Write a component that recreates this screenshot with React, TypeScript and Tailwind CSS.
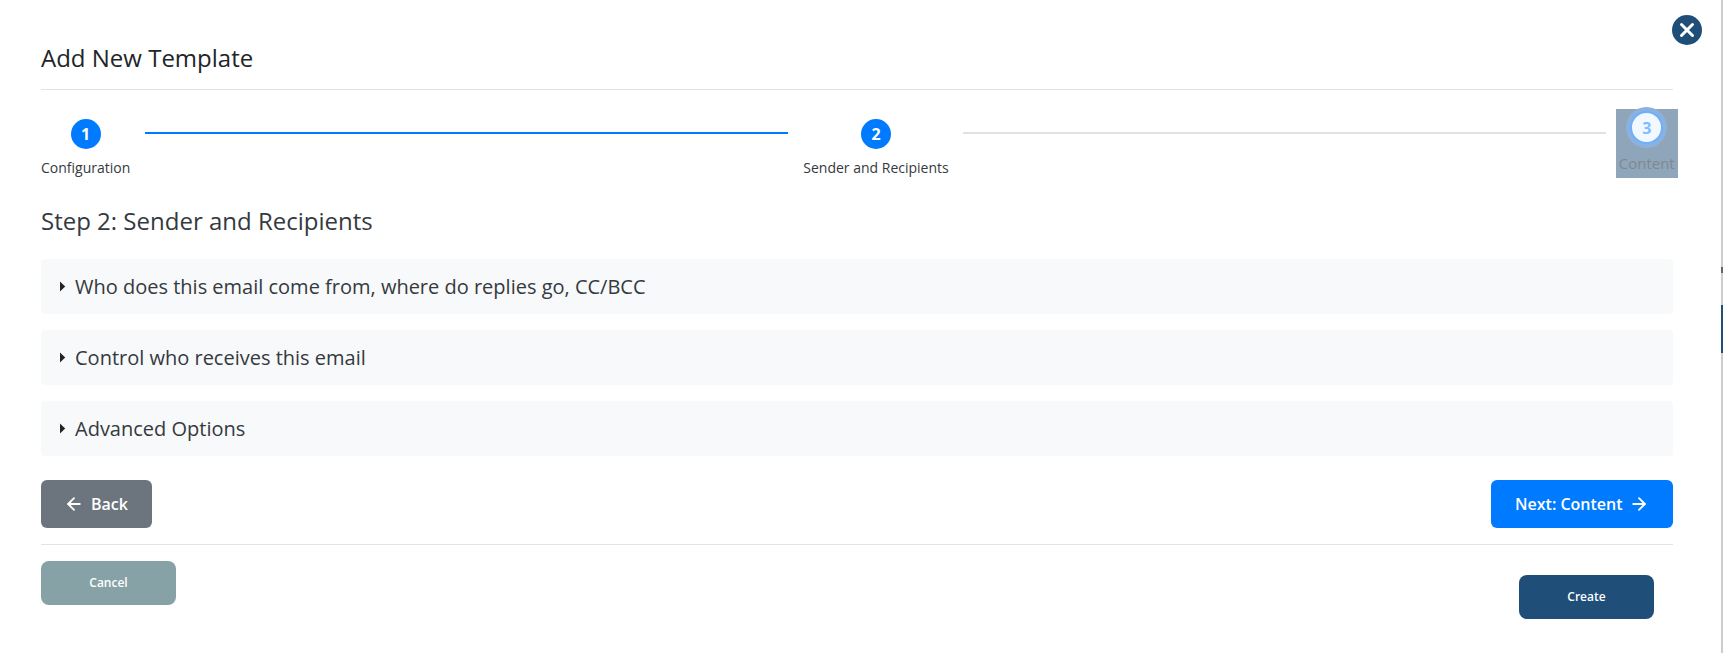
import { ArrowLeft, ArrowRight } from "lucide-react";

const sections = [
  "Who does this email come from, where do replies go, CC/BCC",
  "Control who receives this email",
  "Advanced Options",
];

function Caret() {
  return (
    <svg width="5" height="9" viewBox="0 0 5 9" className="shrink-0 overflow-visible">
      <path d="M0 -0.5 L5.2 4.5 L0 9.5 Z" fill="#212529" />
    </svg>
  );
}

function Step({ n, label }: { n: number; label: string }) {
  return (
    <div className="flex shrink-0 flex-col items-center">
      <div className="flex h-[30px] w-[30px] items-center justify-center rounded-full bg-[#007bff] text-[16px] font-bold text-white">
        {n}
      </div>
      <span className="mt-[9px] text-[14px] leading-[19px] whitespace-nowrap text-[#343a40]">
        {label}
      </span>
    </div>
  );
}

export default function App() {
  return (
    <div className="relative h-[653px] w-full overflow-hidden bg-white font-['Open_Sans',sans-serif]">
      {/* close button */}
      <button className="absolute top-[15px] left-[1672px] flex h-[30px] w-[30px] items-center justify-center rounded-full bg-[#1f4e79]">
        <svg width="16" height="16" viewBox="0 0 16 16">
          <path d="M2.5 2.5 L13.5 13.5 M13.5 2.5 L2.5 13.5" stroke="#fff" strokeWidth="3" strokeLinecap="round" />
        </svg>
      </button>

      {/* page scrollbar strip */}
      <div className="absolute top-0 right-0 h-full w-[2px] bg-[#cccccc]">
        <div className="mt-[267px] h-[6px] w-full bg-[#666666]" />
        <div className="mt-[32px] h-[48px] w-full bg-[#1f4e79]" />
      </div>

      <div className="ml-[41px] w-[1632px]">
        <div className="flex h-[90px] items-end border-b border-[#e2e3e5] pb-[13px]">
          <h1 className="text-[24px] leading-[36px] font-normal text-[#212529]">Add New Template</h1>
        </div>

        <div className="flex h-[113px] items-start pt-[29px]">
          <Step n={1} label="Configuration" />
          <div className="mx-[15px] mt-[13px] h-[2px] w-[643px] shrink-0 bg-[#007bff]" />
          <Step n={2} label="Sender and Recipients" />
          <div className="mt-[13px] mr-[10px] ml-[14px] h-[2px] w-[643px] shrink-0 bg-[#dee2e6]" />
          <div className="-mt-[10px] flex h-[69px] w-[62px] shrink-0 flex-col items-center bg-[#8fa6ba] pt-[4px]">
            <div className="flex h-[29px] w-[29px] items-center justify-center rounded-full bg-[#f2f8ff] text-[16px] font-bold text-[#80bdff] shadow-[0_0_0_2px_#6eb0fb,0_0_0_6px_#8bb2de]">
              3
            </div>
            <span className="mt-[12px] text-[15px] leading-[19px] text-[#7f8892]">Content</span>
          </div>
        </div>

        <h2 className="text-[24px] leading-[36px] font-normal text-[#343a40]">Step 2: Sender and Recipients</h2>

        <div className="mt-[20px] flex flex-col gap-[16px]">
          {sections.map((s) => (
            <div key={s} className="flex h-[55px] items-center gap-[10px] rounded-[4px] bg-[#f8f9fa] pl-[19px] text-[20px] text-[#343a40]">
              <Caret />
              <span>{s}</span>
            </div>
          ))}
        </div>

        <div className="mt-[24px] flex justify-between">
          <button className="flex h-[48px] w-[111px] items-center justify-start gap-[7px] rounded-[6px] bg-[#6c757d] pl-[23px] text-[16px] font-semibold text-white">
            <ArrowLeft size={20} strokeWidth={2.2} />
            Back
          </button>
          <button className="flex h-[48px] w-[182px] items-center justify-start gap-[6px] rounded-[6px] bg-[#007bff] pl-[24px] text-[16px] font-semibold text-white">
            Next: Content
            <ArrowRight size={20} strokeWidth={2.2} />
          </button>
        </div>

        <div className="mt-[16px] border-t border-[#e2e3e5]" />

        <div className="mt-[16px] flex items-start justify-between pr-[19px]">
          <button className="h-[44px] w-[135px] rounded-[8px] bg-[#87a2a7] text-[12px] font-semibold text-white">
            Cancel
          </button>
          <button className="mt-[14px] h-[44px] w-[135px] rounded-[8px] bg-[#1f4e79] text-[12px] font-semibold text-white">
            Create
          </button>
        </div>
      </div>
    </div>
  );
}
